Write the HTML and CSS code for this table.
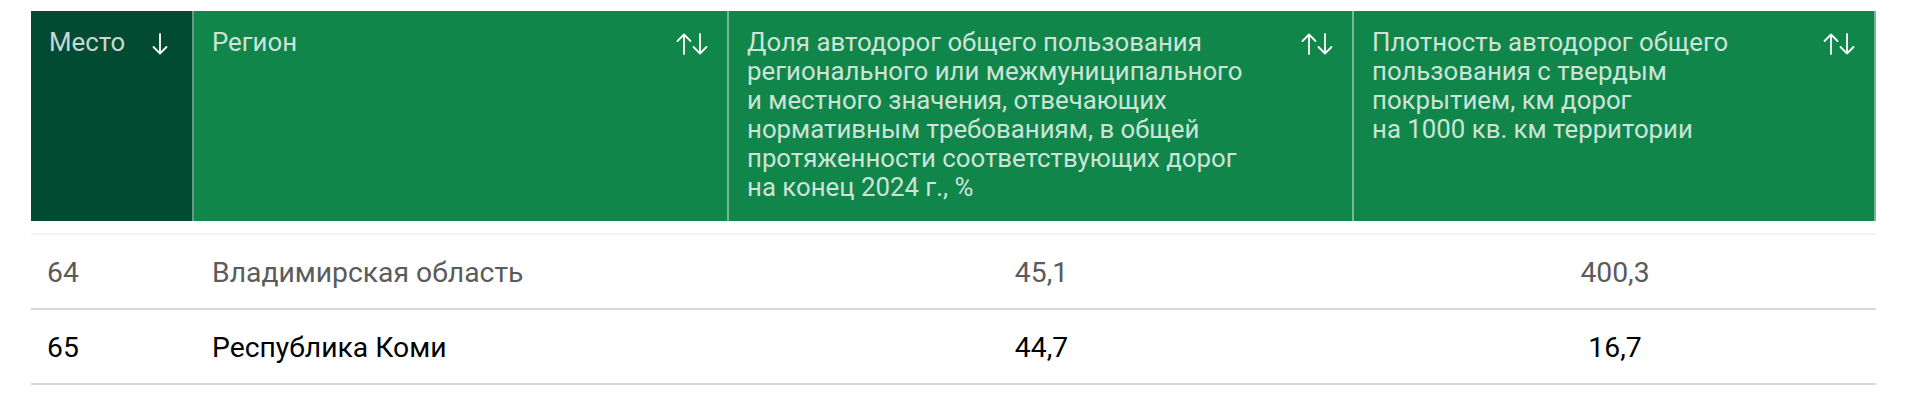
FILE: index.html
```html
<!DOCTYPE html>
<html lang="ru">
<head>
<meta charset="utf-8">
<title>Рейтинг регионов</title>
<link rel="stylesheet" href="styles.css">
</head>
<body>
<div class="table">
  <div class="thead">
    <div class="th th-place">
      <span class="th-text">Место</span>
      <svg class="sort" viewBox="0 0 32 22" aria-hidden="true"><path d="M16 1V20.5M9.5 14L16 20.5L22.5 14"/></svg>
    </div>
    <div class="th">
      <span class="th-text">Регион</span>
      <svg class="sort" viewBox="0 0 32 22" aria-hidden="true"><path d="M8 21V1.5M1.5 8L8 1.5L14.5 8M24 1V20.5M17.5 14L24 20.5L30.5 14"/></svg>
    </div>
    <div class="th">
      <span class="th-text">Доля автодорог общего пользования<br>регионального или межмуниципального<br>и местного значения, отвечающих<br>нормативным требованиям, в общей<br>протяженности соответствующих дорог<br>на конец 2024 г., %</span>
      <svg class="sort" viewBox="0 0 32 22" aria-hidden="true"><path d="M8 21V1.5M1.5 8L8 1.5L14.5 8M24 1V20.5M17.5 14L24 20.5L30.5 14"/></svg>
    </div>
    <div class="th">
      <span class="th-text">Плотность автодорог общего<br>пользования с твердым<br>покрытием, км дорог<br>на 1000 кв. км территории</span>
      <svg class="sort" viewBox="0 0 32 22" aria-hidden="true"><path d="M8 21V1.5M1.5 8L8 1.5L14.5 8M24 1V20.5M17.5 14L24 20.5L30.5 14"/></svg>
    </div>
  </div>
  <div class="tbody">
    <div class="tr tr-muted">
      <div class="td td-place">64</div>
      <div class="td td-region">Владимирская область</div>
      <div class="td td-num">45,1</div>
      <div class="td td-num">400,3</div>
    </div>
    <div class="tr">
      <div class="td td-place">65</div>
      <div class="td td-region">Республика Коми</div>
      <div class="td td-num">44,7</div>
      <div class="td td-num">16,7</div>
    </div>
  </div>
</div>
</body>
</html>
```
FILE: styles.css
```css
html, body {
  margin: 0;
  padding: 0;
  background: #ffffff;
}

body {
  font-family: Roboto, "Noto Sans", "Liberation Sans", sans-serif;
}

.table {
  width: 1845px;
  margin: 11px 0 0 31px;
}

.thead {
  display: grid;
  grid-template-columns: 163px 535px 625px 522px;
  height: 210px;
  background: #10864a;
}

.th {
  box-sizing: border-box;
  display: flex;
  justify-content: space-between;
  align-items: flex-start;
  padding: 17px 19px 0 18px;
  border-right: 2px solid rgba(255, 255, 255, 0.42);
  color: rgba(255, 255, 255, 0.8);
  font-size: 25.8px;
  line-height: 29px;
  font-weight: 400;
}

.th-place {
  background: #014b32;
  padding-right: 16px;
}

.th-text {
  white-space: nowrap;
}

.sort {
  flex: none;
  width: 32px;
  height: 22px;
  margin-top: 5px;
  fill: none;
  stroke: #ffffff;
  stroke-width: 1.8;
  stroke-linecap: round;
  stroke-linejoin: round;
}

.tbody {
  margin-top: 12px;
  border-top: 2px solid #f3f3f3;
}

.tr {
  display: grid;
  grid-template-columns: 163px 535px 625px 522px;
  height: 75px;
  box-sizing: border-box;
  padding-top: 2px;
  border-bottom: 2px solid #d8d8d8;
  color: #000000;
  font-size: 28.3px;
  line-height: 32px;
}

.tr-muted {
  color: #5b5b5b;
}

.td {
  display: flex;
  align-items: center;
}

.td-place {
  padding-left: 16px;
}

.td-region {
  padding-left: 18px;
}

.td-num {
  justify-content: center;
}
```
